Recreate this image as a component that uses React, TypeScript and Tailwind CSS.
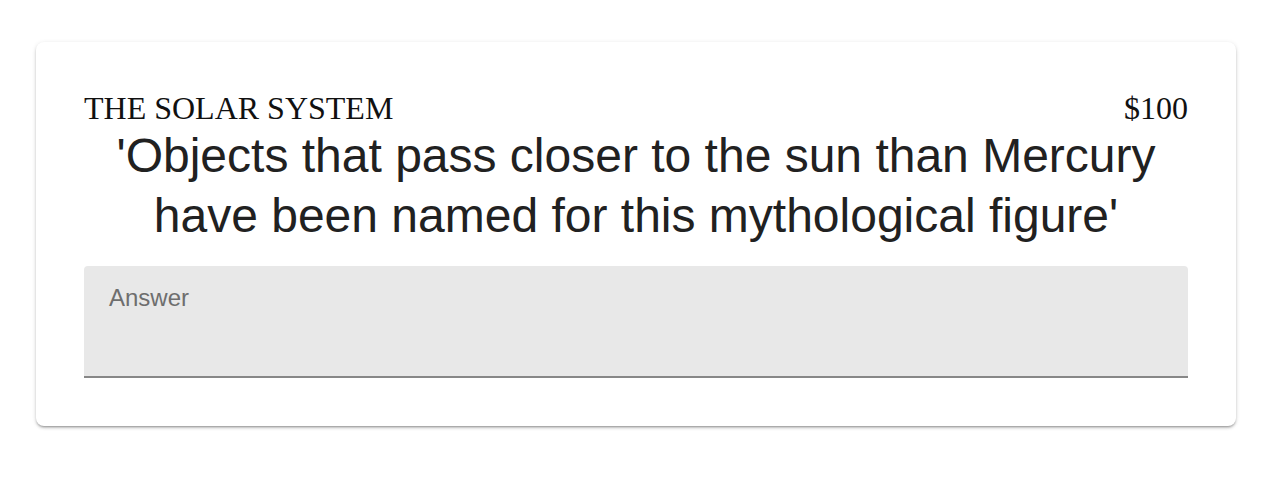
export default function App() {
  return (
    <div className="min-h-screen bg-white pl-[36px] pt-[42px]">
      <div className="w-[1200px] rounded-lg bg-white p-12 shadow-[0_2px_2px_-1px_rgba(0,0,0,0.25),0_2px_3px_0_rgba(0,0,0,0.14),0_1px_5px_0_rgba(0,0,0,0.1)]">
        {/* Category + value */}
        <div className="flex items-baseline justify-between font-['Liberation_Serif',serif] text-[32px] leading-[36px] text-[#111]">
          <span>THE SOLAR SYSTEM</span>
          <span>$100</span>
        </div>

        {/* Clue */}
        <p className="text-center font-['Liberation_Sans',Arial,sans-serif] text-[48px] leading-[60px] text-[#212121]">
          'Objects that pass closer to the sun than Mercury have been named for this mythological figure'
        </p>

        {/* Answer field */}
        <div className="mt-[20px] h-[112px] rounded-t-[4px] border-b-2 border-[#878787] bg-[#e8e8e8] px-[25px] pt-[18px]">
          <span className="font-['Liberation_Sans',Arial,sans-serif] text-[24px] leading-[28px] text-[#6e6e6e]">
            Answer
          </span>
        </div>
      </div>
    </div>
  );
}
